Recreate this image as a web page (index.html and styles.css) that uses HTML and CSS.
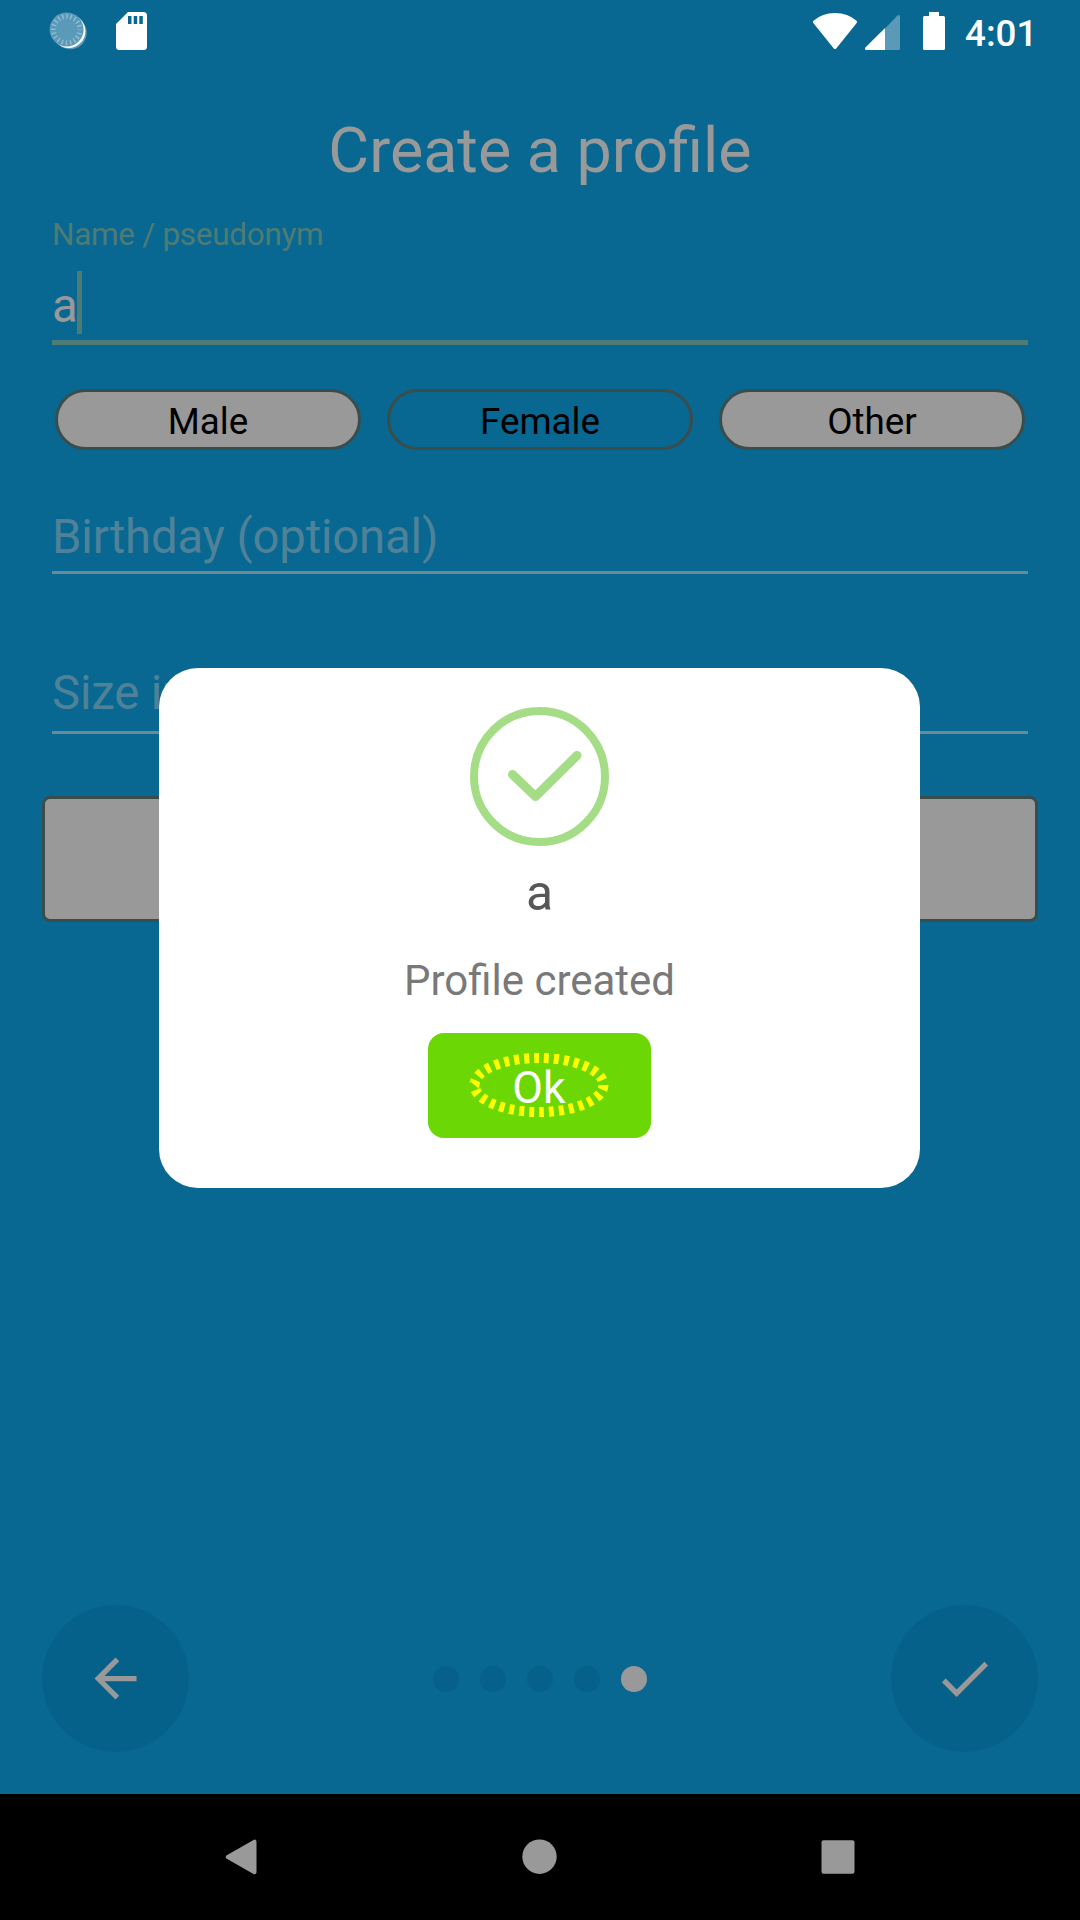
FILE: index.html
```html
<!DOCTYPE html>
<html lang="en">
<head>
<meta charset="utf-8">
<title>Create a profile</title>
<link rel="stylesheet" href="styles.css">
</head>
<body>
<div class="screen">
  <header class="status">
    <svg class="spinner" width="40" height="40" viewBox="0 0 40 40">
      <circle cx="22.300" cy="21.800" r="16.500" fill="#5a9ab8"/>
      <circle cx="20.600" cy="20.200" r="16.800" fill="#fff"/>
      <circle cx="18.600" cy="18.500" r="17" fill="#5a9ab8"/>
      <circle cx="18.600" cy="18.500" r="13.200" fill="none" stroke="#94bed1" stroke-width="5" stroke-dasharray="1.3 2.847" stroke-dashoffset=".65"/>
    </svg>
    <svg class="sdcard" width="31" height="38" viewBox="0 0 31 38">
      <path fill="#fff" fill-rule="evenodd" d="M12 0H27.500Q31 0 31 3.500V34.500Q31 38 27.500 38H3.500Q0 38 0 34.500V12ZM12 4V12H15.500V4ZM17.700 4V12H21.200V4ZM23.300 4V12H26.800V4Z"/>
    </svg>
    <span class="grow"></span>
    <svg class="wifi" width="46" height="37" viewBox="0 0 46 37">
      <path fill="#fff" d="M1.500 7.800Q10 0 23 0T44.500 7.800Q45.500 8.800 44.700 10L24.200 35.500Q23 36.700 21.800 35.500L1.300 10Q.5 8.800 1.500 7.800Z"/>
    </svg>
    <svg class="signal" width="35" height="35" viewBox="0 0 35 35">
      <path fill="#5a9ab8" d="M20 13.500 32.500 .6Q35-1 35 2V33.500Q35 35 33.500 35H20Z"/>
      <path fill="#fff" d="M20 13V35H1.500Q-.8 34.500 .4 32.600Z"/>
    </svg>
    <svg class="battery" width="22" height="38" viewBox="0 0 22 38">
      <path fill="#fff" d="M6 0H16V4H20.500Q22 4 22 5.500V36.500Q22 38 20.500 38H1.500Q0 38 0 36.500V5.500Q0 4 1.500 4H6Z"/>
    </svg>
    <span class="clock">4:01</span>
  </header>

  <main class="form">
    <h1 class="title">Create a profile</h1>
    <div class="label">Name / pseudonym</div>
    <div class="field name"><span>a</span><i class="caret"></i></div>
    <div class="pills">
      <div class="pill filled">Male</div>
      <div class="pill">Female</div>
      <div class="pill filled">Other</div>
    </div>
    <div class="field birthday">Birthday (optional)</div>
    <div class="field size">Size in cm</div>
    <div class="wide-button"></div>
  </main>

  <footer class="pager">
    <div class="round">
      <svg width="63" height="63" viewBox="0 0 24 24"><path fill="#999" d="M20 11H7.830l5.590-5.590L12 4l-8 8 8 8 1.410-1.410L7.830 13H20v-2z"/></svg>
    </div>
    <div class="dots">
      <i class="dot"></i><i class="dot"></i><i class="dot"></i><i class="dot"></i><i class="dot active"></i>
    </div>
    <div class="round">
      <svg width="63" height="63" viewBox="0 0 24 24"><path fill="#999" d="M9 16.170 4.830 12l-1.420 1.410L9 19 21 7l-1.410-1.410z"/></svg>
    </div>
  </footer>

  <nav class="navbar">
    <svg width="36" height="36" viewBox="0 0 36 36"><path fill="#999" stroke="#999" stroke-width="4" stroke-linejoin="round" d="M3.800 18 30.500 2.700V33.300Z"/></svg>
    <svg width="36" height="36" viewBox="0 0 36 36"><circle cx="17.500" cy="17.700" r="17.200" fill="#999"/></svg>
    <svg width="36" height="36" viewBox="0 0 36 36"><rect x="1.500" y="1.200" width="33" height="33.500" rx="2" fill="#999"/></svg>
  </nav>

  <section class="modal">
    <svg class="success" width="139" height="139" viewBox="0 0 139 139" fill="none" stroke="#a5dc86">
      <circle cx="69.500" cy="69.500" r="65.500" stroke-width="8"/>
      <path d="M42.500 67.500 65.500 89.500 107 48.500" stroke-width="9" stroke-linecap="round" stroke-linejoin="round"/>
    </svg>
    <div class="modal-title">a</div>
    <div class="modal-text">Profile created</div>
    <div class="ok">
      <span>Ok</span>
      <svg class="ring" width="140" height="64" viewBox="0 0 140 64">
        <ellipse cx="70" cy="32" rx="64.500" ry="27" fill="none" stroke="#ff0" stroke-width="10" stroke-dasharray="5 5.040" pathLength="301.200"/>
      </svg>
    </div>
  </section>
</div>
</body>
</html>
```
FILE: styles.css
```css
* { box-sizing: border-box; }

body {
  margin: 0;
  font-family: Roboto, sans-serif;
}

svg { display: block; flex: none; }

.screen {
  position: relative;
  display: flex;
  flex-direction: column;
  width: 1080px;
  height: 1920px;
  overflow: hidden;
  background: #086892;
}

/* Status bar */
.status {
  display: flex;
  align-items: flex-start;
  height: 63px;
  padding: 0 48px;
}
.spinner { margin-top: 11px; }
.sdcard { margin: 12px 0 0 28px; }
.grow { flex: 1; }
.wifi { margin: 13px 7px 0 0; }
.signal { margin: 15px 23px 0 0; }
.battery { margin: 12px 20px 0 0; }
.clock {
  width: 67px;
  margin-top: 12px;
  color: #fff;
  font-size: 36.75px;
  font-weight: 500;
  line-height: 44px;
  white-space: nowrap;
}

/* Form */
.form {
  flex: 1;
  display: flex;
  flex-direction: column;
  padding: 0 42px;
}
.title {
  margin: 51px 0 0;
  height: 74px;
  color: #999;
  font-size: 62.8px;
  font-weight: 400;
  line-height: 74px;
  text-align: center;
}
.label {
  margin: 28px 10px 0;
  height: 38px;
  color: #4e7b76;
  font-size: 31.5px;
  letter-spacing: -0.3px;
  line-height: 38px;
}
.field {
  margin: 0 10px;
  color: #4f8298;
  font-size: 47.25px;
  line-height: 56px;
  border-bottom: 3px solid #6a8a98;
}
.name {
  display: flex;
  height: 91px;
  padding-top: 24px;
  color: #999;
  border-bottom: 5px solid #4e7b76;
}
.caret {
  width: 5px;
  height: 63px;
  margin: -7px 0 0 -1px;
  background: #4e7b76;
}
.pills {
  display: grid;
  grid-template-columns: repeat(3, 306px);
  gap: 26px;
  margin: 44px 13px 0;
}
.pill {
  height: 61px;
  border: 3px solid #3a4d4b;
  border-radius: 31px;
  color: #000;
  font-size: 36.75px;
  line-height: 59px;
  text-align: center;
}
.filled { background: #999; }
.birthday {
  height: 65px;
  margin-top: 59px;
  letter-spacing: -0.14px;
}
.size {
  height: 69px;
  margin-top: 91px;
  letter-spacing: -0.14px;
}
.wide-button {
  height: 126px;
  margin-top: 62px;
  border: 3px solid #3a4d4b;
  border-radius: 8px;
  background: #999;
}

/* Step navigation */
.pager {
  display: flex;
  align-items: center;
  justify-content: space-between;
  height: 147px;
  margin: 0 42px 42px;
}
.round {
  display: grid;
  place-items: center;
  width: 147px;
  height: 147px;
  border-radius: 50%;
  background: #06618a;
}
.dots { display: flex; gap: 21px; }
.dot {
  width: 26px;
  height: 26px;
  border-radius: 50%;
  background: #06618a;
}
.active { background: #999; }

.navbar {
  display: flex;
  justify-content: space-between;
  height: 126px;
  padding: 45px 224px 0;
  background: #000;
}

/* Dialog */
.modal {
  position: absolute;
  left: 159px;
  top: 668px;
  display: flex;
  flex-direction: column;
  align-items: center;
  width: 761px;
  height: 520px;
  padding-top: 39px;
  border-radius: 39px;
  background: #fff;
}
.modal-title {
  height: 60px;
  margin-top: 17px;
  color: #575757;
  font-size: 49.875px;
  line-height: 60px;
}
.modal-text {
  height: 50px;
  margin-top: 33px;
  color: #797979;
  font-size: 42px;
  line-height: 50px;
}
.ok {
  position: relative;
  width: 223px;
  height: 105px;
  margin-top: 27px;
  padding-right: 1px;
  border-radius: 16px;
  background: #6bd705;
  color: #fff;
  font-size: 44.625px;
  line-height: 110px;
  text-align: center;
}
.ring { position: absolute; left: 41px; top: 20px; }
```
